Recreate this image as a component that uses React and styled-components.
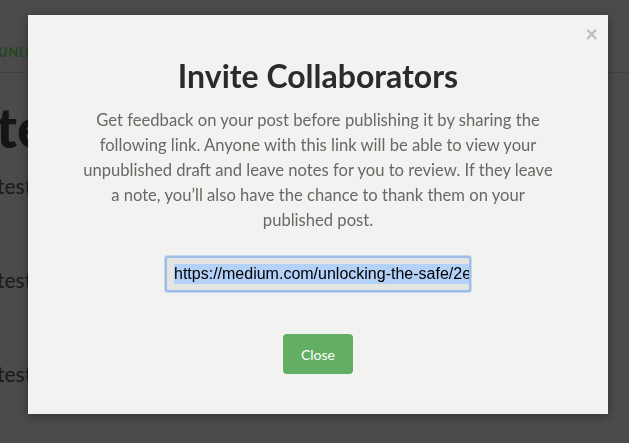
import styled, { createGlobalStyle } from "styled-components";

const GlobalStyle = createGlobalStyle`
  html, body {
    margin: 0;
    padding: 0;
    background: #4b4b4b;
    overflow: hidden;
  }
  * { box-sizing: border-box; }
`;

export default function App() {
  return (
    <>
      <GlobalStyle />
      <Page>
        <TopBar>
          <Brand>UNLOCKING THE SAFE</Brand>
        </TopBar>
        <Article>
          <h1>test</h1>
          <p>test</p>
          <p>test</p>
          <p>test</p>
        </Article>
      </Page>
      <Overlay>
        <Modal>
          <Dismiss>×</Dismiss>
          <Title>Invite Collaborators</Title>
          <Lead>
            Get feedback on your post before publishing it by sharing the
            following link. Anyone with this link will be able to view your
            unpublished draft and leave notes for you to review. If they leave
            a note, you’ll also have the chance to thank them on your
            published post.
          </Lead>
          <LinkField>
            <Selected>https://medium.com/unlocking-the-safe/2e1b8f</Selected>
          </LinkField>
          <CloseButton>Close</CloseButton>
        </Modal>
      </Overlay>
    </>
  );
}

const Page = styled.div`
  width: 100%;
  height: 443px;
  background: #4b4b4b;
  font-family: Lato, "Liberation Sans", sans-serif;
`;

const TopBar = styled.header`
  height: 73px;
  display: flex;
  align-items: flex-end;
  padding-bottom: 12px;
  border-bottom: 1px solid #414141;
`;

const Brand = styled.span`
  font-size: 13px;
  font-weight: 700;
  letter-spacing: 0.5px;
  color: #1e4a1e;
  margin-left: -2px;
`;

const Article = styled.div`
  color: #151515;

  h1 {
    margin: 22px 0 0 -4px;
    font-size: 56px;
    font-weight: 900;
    line-height: 64px;
  }

  p {
    margin: 0 0 72px -3px;
    font-size: 21px;
    line-height: 22px;
    color: #1a1a1a;
  }

  p:first-of-type {
    margin-top: 16px;
  }
`;

const Overlay = styled.div`
  position: fixed;
  inset: 0;
  display: flex;
  justify-content: center;
  align-items: flex-start;
  padding-top: 15px;
`;

const Modal = styled.div`
  position: relative;
  width: 580px;
  height: 399px;
  margin-left: 7px;
  background: #f2f2f0;
  box-shadow: 0 2px 10px rgba(0, 0, 0, 0.35);
  display: flex;
  flex-direction: column;
  align-items: center;
  padding: 39px 55px 0;
  font-family: Lato, "Liberation Sans", sans-serif;
`;

const Dismiss = styled.span`
  position: absolute;
  top: 8px;
  right: 10px;
  font-size: 22px;
  line-height: 22px;
  font-weight: 700;
  color: #b8bcc0;
`;

const Title = styled.h2`
  margin: 0;
  font-size: 32px;
  line-height: 44px;
  font-weight: 700;
  color: #2b2b2b;
`;

const Lead = styled.p`
  margin: 10px 0 0;
  font-size: 16.6px;
  line-height: 25px;
  text-align: center;
  color: #686866;
`;

const LinkField = styled.div`
  margin-top: 23px;
  width: 306px;
  height: 36px;
  padding: 0 6px 0 7px;
  display: flex;
  align-items: center;
  overflow: hidden;
  white-space: nowrap;
  background: #e4e4e2;
  border: 2px solid #9dbde6;
  border-radius: 3px;
  box-shadow: 0 0 0 1px #c4d8f2;
  font-family: "Liberation Sans", Arial, sans-serif;
  font-size: 16px;
  color: #000;
`;

const Selected = styled.span`
  background: #b4d1f8;
  line-height: 20px;
`;

const CloseButton = styled.button`
  margin-top: 42px;
  width: 70px;
  height: 40px;
  border: none;
  border-radius: 4px;
  background: #62ae62;
  color: #fff;
  font-family: Lato, "Liberation Sans", sans-serif;
  font-size: 14px;
`;
